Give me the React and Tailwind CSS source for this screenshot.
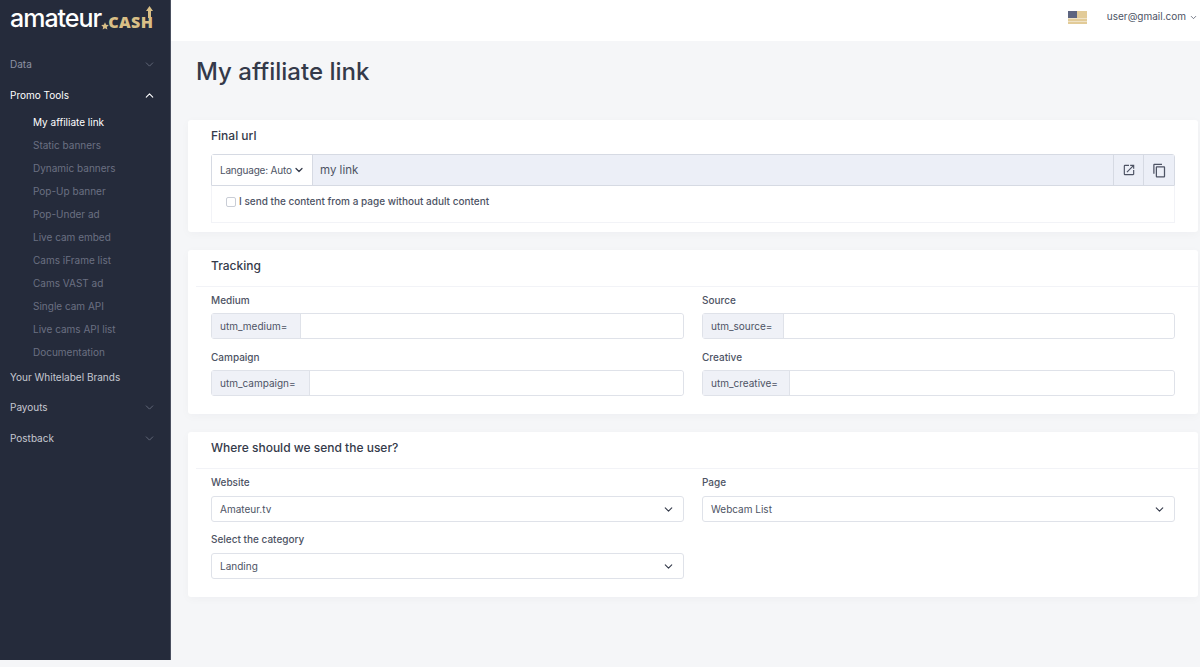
import React from 'react';
import { ChevronDown, ChevronUp } from 'lucide-react';
import { MdOutlineOpenInNew, MdOutlineContentCopy } from 'react-icons/md';

const promoLinks = [
  'My affiliate link',
  'Static banners',
  'Dynamic banners',
  'Pop-Up banner',
  'Pop-Under ad',
  'Live cam embed',
  'Cams iFrame list',
  'Cams VAST ad',
  'Single cam API',
  'Live cams API list',
  'Documentation',
];

const Logo = () => (
  <div className="h-[41px] pl-[10px] pt-[3px] flex items-start">
    <span className="text-[25px] leading-[30px] text-white font-medium tracking-[-1px]">amateur</span>
    <svg className="w-[8px] h-[8px] mt-[19px]" viewBox="0 0 24 24" fill="#d9bf86">
      <path d="M12 1l3.400 7.400 8 .9-5.900 5.400 1.600 8L12 18.800l-7.100 4 1.600-8L.6 9.300l8-.9z" />
    </svg>
    <span className="relative mt-[9px] -ml-[1px] text-[16px] leading-[21px] text-[#d9bf86] font-extrabold tracking-[0.4px] font-['Open_Sans',sans-serif]">
      CASH
      <svg className="absolute right-0 -top-[6px] w-[7px] h-[12px]" viewBox="0 0 7 12" fill="#d9bf86">
        <path d="M3.500 0L7 5H5V12H2V5H0z" />
      </svg>
    </span>
  </div>
);

const NavItem = ({ label, open, muted, className }) => (
  <div className={`flex items-center justify-between pl-[10px] pr-[14px] text-[10px] ${className} ${open ? 'text-white' : muted ? 'text-[#8d92a3]' : 'text-[#c5c8d1]'}`}>
    <span>{label}</span>
    {open ? <ChevronUp size={13} strokeWidth={2} color="#fff" /> : label !== 'Your Whitelabel Brands' && <ChevronDown size={13} strokeWidth={1.500} color="#6d7284" />}
  </div>
);

const Sidebar = () => (
  <aside className="w-[171px] h-[660px] shrink-0 bg-[#252b3b] border-r border-[#4a5060]">
    <Logo />
    <nav className="pt-[13px]">
      <NavItem label="Data" muted className="h-[20px]" />
      <NavItem label="Promo Tools" open className="h-[20px] mt-[11px]" />
      <ul className="pt-[6px]">
        {promoLinks.map((link, i) => (
          <li key={link} className={`h-[23px] pl-[33px] flex items-center text-[10px] ${i === 0 ? 'text-white' : 'text-[#6b7082]'}`}>
            {link}
          </li>
        ))}
      </ul>
      <NavItem label="Your Whitelabel Brands" className="h-[20px] mt-[3px]" />
      <NavItem label="Payouts" className="h-[20px] mt-[10px]" />
      <NavItem label="Postback" className="h-[20px] mt-[11px]" />
    </nav>
  </aside>
);

const Header = () => (
  <header className="h-[41px] bg-white flex items-center justify-end pr-[2px]">
    <svg className="w-[19px] h-[13px] mb-[7px]" viewBox="0 0 19 13">
      <rect width="19" height="13" fill="#e2cb98" />
      <rect y="7" width="19" height="1" fill="#efe2c6" />
      <rect y="10" width="19" height="1" fill="#efe2c6" />
      <rect width="9" height="7" fill="#5d6480" />
    </svg>
    <span className="ml-[20px] mb-[8px] text-[10px] text-[#4d5364]">user@gmail.com</span>
    <ChevronDown size={9} strokeWidth={2} color="#4d5364" className="ml-[3px] mb-[7px]" />
  </header>
);

const Card = ({ title, divided, className, children }) => (
  <section className={`bg-white rounded-[3px] shadow-[0_2px_10px_rgba(40,45,60,0.03)] pb-[18px] ${className}`}>
    <div className={`ml-[8px] pl-[15px] flex items-center text-[12px] font-medium text-[#343a4a] ${divided ? 'h-[37px] pb-[5px] border-b border-[#f2f3f7]' : 'h-[34px] pb-[2px]'}`}>
      {title}
    </div>
    {children}
  </section>
);

const Label = ({ children, className }) => (
  <div className={`text-[10px] font-medium leading-[14px] text-[#4d5364] ${className}`}>{children}</div>
);

const UtmField = ({ label, prefix, width }) => (
  <div>
    <Label className="mb-[6px]">{label}</Label>
    <div className="h-[26px] flex border border-[#dfe2e9] rounded-[3px]">
      <span className={`${width} shrink-0 pl-[8px] flex items-center bg-[#eff1f7] border-r border-[#dfe2e9] text-[10px] text-[#4d5364]`}>{prefix}</span>
      <span className="flex-1 bg-white rounded-r-[3px]" />
    </div>
  </div>
);

const SelectField = ({ label, value }) => (
  <div>
    <Label className="mb-[7px]">{label}</Label>
    <div className="h-[26px] pl-[8px] pr-[8px] flex items-center justify-between border border-[#dfe2e9] rounded-[3px] bg-white text-[10px] text-[#4d5364]">
      <span>{value}</span>
      <ChevronDown size={13} strokeWidth={2} color="#343a4a" />
    </div>
  </div>
);

const App = () => (
  <div className="w-[1200px] h-[667px] overflow-hidden flex bg-[#f5f6f8] font-['Inter',sans-serif]">
    <Sidebar />
    <main className="flex-1 min-w-0">
      <Header />
      <h1 className="h-[79px] pl-[25px] pt-[13px] text-[24px] leading-[36px] font-medium text-[#343a4a]">My affiliate link</h1>
      <div className="pl-[17px] pr-[2px] flex flex-col gap-[18px]">
        <Card title="Final url" className="!pb-[9px]">
          <div className="px-[23px]">
            <div className="h-[32px] flex border border-[#d6dae3] rounded-t-[3px] text-[#4d5364]">
              <div className="w-[101px] pl-[8px] flex items-center bg-white border-r border-[#d6dae3] text-[10px] tracking-[-0.2px]">
                Language: Auto
                <ChevronDown size={12} strokeWidth={2.500} color="#343a4a" className="ml-[1px]" />
              </div>
              <div className="flex-1 flex items-center pl-[7px] pt-[1px] bg-[#eceff7] text-[11.500px]">my link</div>
              <div className="w-[30px] flex items-center justify-center bg-[#eceff7] border-l border-[#d6dae3]">
                <MdOutlineOpenInNew size={14} />
              </div>
              <div className="w-[31px] flex items-center justify-center bg-[#eceff7] border-l border-[#d6dae3]">
                <MdOutlineContentCopy size={15} />
              </div>
            </div>
            <div className="h-[37px] pl-[14px] pt-[9px] flex items-start gap-[3px] border-x border-b border-[#f2f3f7] text-[10px] font-medium text-[#4d5364]">
              <span className="w-[10px] h-[10px] mt-[2px] rounded-[2px] border border-[#c9cdd6] bg-white" />
              <span className="leading-[13px]">I send the content from a page without adult content</span>
            </div>
          </div>
        </Card>

        <Card title="Tracking" divided>
          <div className="px-[23px] pt-[6px] grid grid-cols-2 gap-x-[18px] gap-y-[11px]">
            <UtmField label="Medium" prefix="utm_medium=" width="w-[89px]" />
            <UtmField label="Source" prefix="utm_source=" width="w-[81px]" />
            <UtmField label="Campaign" prefix="utm_campaign=" width="w-[98px]" />
            <UtmField label="Creative" prefix="utm_creative=" width="w-[87px]" />
          </div>
        </Card>

        <Card title="Where should we send the user?" divided>
          <div className="px-[23px] pt-[6px] grid grid-cols-2 gap-x-[18px] gap-y-[10px]">
            <SelectField label="Website" value="Amateur.tv" />
            <SelectField label="Page" value="Webcam List" />
            <SelectField label="Select the category" value="Landing" />
          </div>
        </Card>
      </div>
    </main>
  </div>
);

export default App;
